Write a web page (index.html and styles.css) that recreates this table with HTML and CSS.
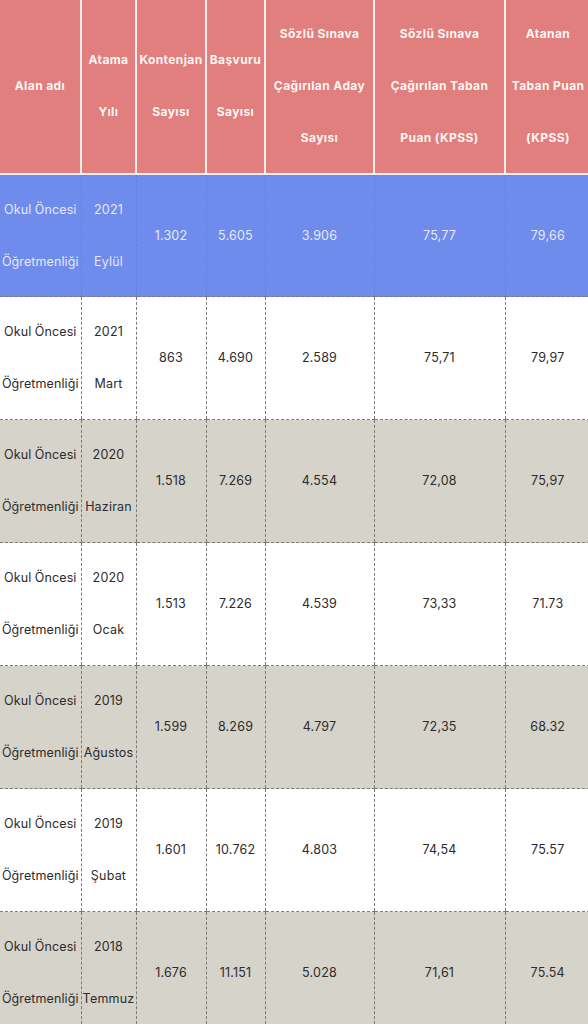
FILE: index.html
```html
<!DOCTYPE html>
<html lang="tr">
<head>
<meta charset="utf-8">
<link rel="stylesheet" href="styles.css">
</head>
<body>
<table class="data">
  <colgroup>
    <col class="c1"><col class="c2"><col class="c3"><col class="c4"><col class="c5"><col class="c6"><col class="c7">
  </colgroup>
  <thead>
    <tr>
      <th>Alan adı</th>
      <th>Atama<br>Yılı</th>
      <th>Kontenjan<br>Sayısı</th>
      <th>Başvuru<br>Sayısı</th>
      <th>Sözlü Sınava<br>Çağırılan Aday<br>Sayısı</th>
      <th>Sözlü Sınava<br>Çağırılan Taban<br>Puan (KPSS)</th>
      <th>Atanan<br>Taban Puan<br>(KPSS)</th>
    </tr>
  </thead>
  <tbody>
    <tr class="hl">
      <td>Okul Öncesi<br>Öğretmenliği</td><td>2021<br>Eylül</td><td>1.302</td><td>5.605</td><td>3.906</td><td>75,77</td><td>79,66</td>
    </tr>
    <tr>
      <td>Okul Öncesi<br>Öğretmenliği</td><td>2021<br>Mart</td><td>863</td><td>4.690</td><td>2.589</td><td>75,71</td><td>79,97</td>
    </tr>
    <tr class="alt">
      <td>Okul Öncesi<br>Öğretmenliği</td><td>2020<br>Haziran</td><td>1.518</td><td>7.269</td><td>4.554</td><td>72,08</td><td>75,97</td>
    </tr>
    <tr>
      <td>Okul Öncesi<br>Öğretmenliği</td><td>2020<br>Ocak</td><td>1.513</td><td>7.226</td><td>4.539</td><td>73,33</td><td>71.73</td>
    </tr>
    <tr class="alt">
      <td>Okul Öncesi<br>Öğretmenliği</td><td>2019<br>Ağustos</td><td>1.599</td><td>8.269</td><td>4.797</td><td>72,35</td><td>68.32</td>
    </tr>
    <tr>
      <td>Okul Öncesi<br>Öğretmenliği</td><td>2019<br>Şubat</td><td>1.601</td><td>10.762</td><td>4.803</td><td>74,54</td><td>75.57</td>
    </tr>
    <tr class="alt">
      <td>Okul Öncesi<br>Öğretmenliği</td><td>2018<br>Temmuz</td><td>1.676</td><td>11.151</td><td>5.028</td><td>71,61</td><td>75.54</td>
    </tr>
  </tbody>
</table>
</body>
</html>
```

FILE: styles.css
```css
html, body {
  margin: 0;
  padding: 0;
  background: #ffffff;
}
body {
  font-family: Inter, "Noto Sans", "Liberation Sans", sans-serif;
  overflow: hidden;
}
.data {
  width: 590px;
  table-layout: fixed;
  border-collapse: collapse;
}
.c1 { width: 81px; }
.c2 { width: 55px; }
.c3 { width: 70px; }
.c4 { width: 59px; }
.c5 { width: 109px; }
.c6 { width: 131px; }
.c7 { width: 85px; }

.data th {
  background: #e07f7e;
  color: #fff6f2;
  font-size: 12px;
  letter-spacing: 0.4px;
  font-weight: 700;
  line-height: 52px;
  padding: 8px 0 9px;
  text-align: center;
  vertical-align: middle;
  white-space: nowrap;
  border-left: 2px solid #fbeeea;
  border-bottom: 2px solid #fbeeea;
}
.data th:first-child { border-left: none; }

.data td {
  font-size: 12.5px;
  letter-spacing: 0.2px;
  color: #2c2c2c;
  line-height: 52px;
  padding: 9px 0 9px;
  text-align: center;
  vertical-align: middle;
  white-space: nowrap;
  border-left: 1px dashed #7a7a7a;
  border-bottom: 1px dashed #7a7a7a;
}
.data td:first-child { border-left: none; letter-spacing: 0.1px; }

.data tr.hl td {
  background: #6f8bec;
  color: #e4e8fb;
  border-left-color: #6480de;
  padding-bottom: 8px;
}
.data tr.hl td:first-child { border-left: none; }
.data tr.alt td {
  background: #d6d3ca;
}
```
